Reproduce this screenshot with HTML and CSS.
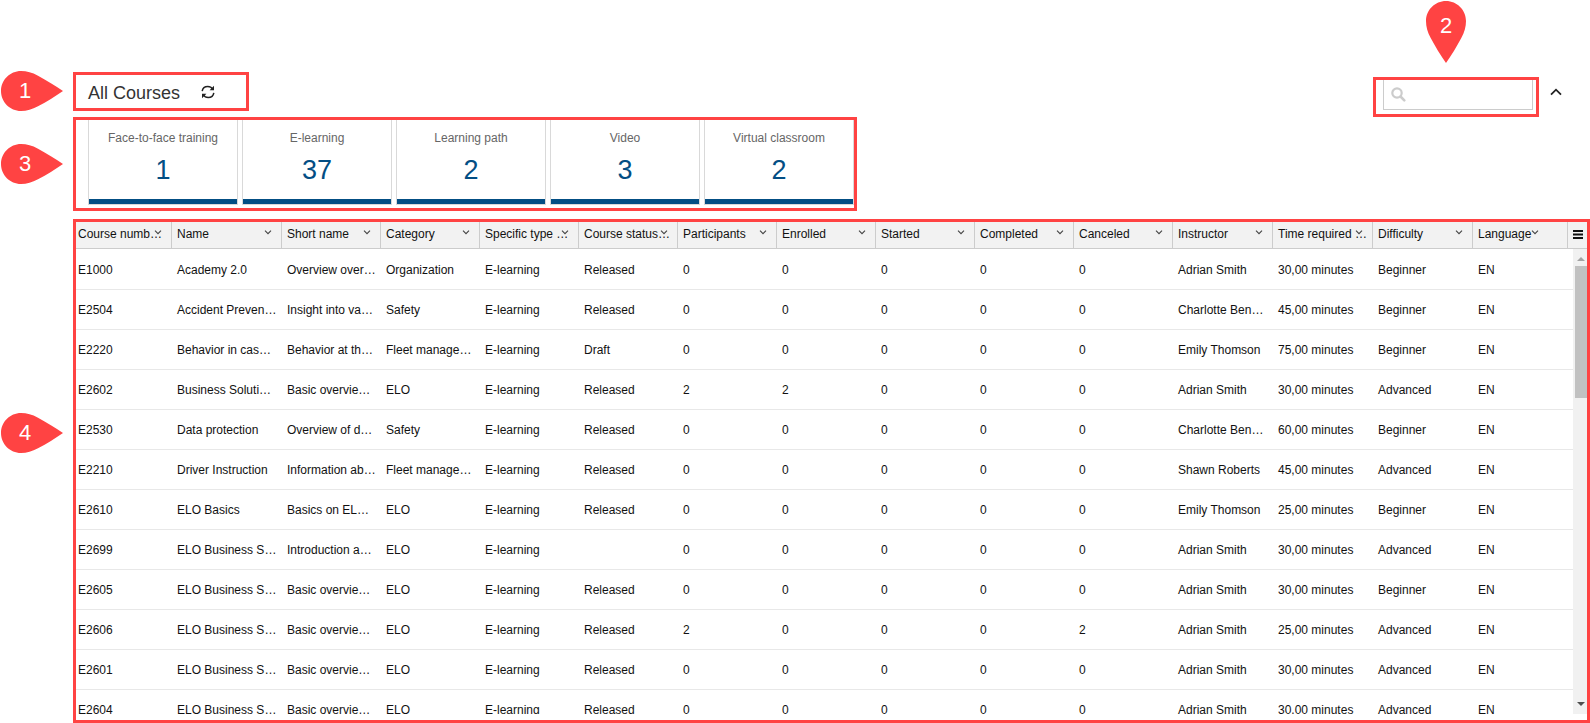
FILE: index.html
```html
<!DOCTYPE html>
<html lang="en">
<head>
<meta charset="utf-8">
<title>All Courses</title>
<link rel="stylesheet" href="styles.css">
</head>
<body>
<svg class="defs" aria-hidden="true">
  <symbol id="pin-right" viewBox="0 0 62 40"><path d="M20 0C9 0 0 9 0 20s9 20 20 20c6 0 11-1.500 17-4.700C46 30.500 54 25.500 62 20 54 14.500 46 9.500 37 4.700 31 1.500 26 0 20 0z"/></symbol>
  <symbol id="pin-down" viewBox="0 0 40 62"><path d="M0 20C0 9 9 0 20 0s20 9 20 20c0 6-1.500 11-4.700 17C30.500 46 25.500 54 20 62 14.500 54 9.500 46 4.700 37 1.500 31 0 26 0 20z"/></symbol>
  <symbol id="chev" viewBox="0 0 8 5"><path d="M1 .7l3 3 3-3" fill="none" stroke="#444" stroke-width="1.1"/></symbol>
</svg>
<main class="page">
  <header class="toolbar">
    <div class="mark title-mark">
      <span class="pin pin-side"><svg><use href="#pin-right"/></svg><b>1</b></span>
      <h1>All Courses</h1>
      <button class="icon-button" aria-label="Refresh"><svg width="14" height="14" viewBox="0 0 14 14" fill="none" stroke="#222" stroke-width="1.5"><path d="M1.2 6.2C1.6 3.4 4 1.6 6.8 1.6c2.100 0 3.800.9 4.900 2.600M12.800 7.800c-.4 2.800-2.800 4.600-5.600 4.600-2.100 0-3.800-.9-4.900-2.600"/><path d="M13 .8v4.400H8.600zM1 13.200V8.800h4.400z" fill="#222" stroke="none"/></svg></button>
    </div>
    <div class="tools">
      <div class="mark search-mark">
        <span class="pin pin-top"><svg><use href="#pin-down"/></svg><b>2</b></span>
        <div class="search">
          <svg width="15" height="15" viewBox="0 0 15 15" fill="none" stroke="#ccc"><circle cx="6" cy="6" r="4.700" stroke-width="2.200"/><path d="M9.500 9.500l3.800 3.800" stroke-width="2.600" stroke-linecap="round"/></svg>
          <input type="text" aria-label="Search">
        </div>
      </div>
      <button class="icon-button" aria-label="Collapse"><svg width="12" height="8" viewBox="0 0 12 8" fill="none" stroke="#222" stroke-width="1.800"><path d="M1 6.700l5-5 5 5"/></svg></button>
    </div>
  </header>
  <section class="mark cards">
    <span class="pin pin-side"><svg><use href="#pin-right"/></svg><b>3</b></span>
    <div class="card"><span>Face-to-face training</span><strong>1</strong></div>
    <div class="card"><span>E-learning</span><strong>37</strong></div>
    <div class="card"><span>Learning path</span><strong>2</strong></div>
    <div class="card"><span>Video</span><strong>3</strong></div>
    <div class="card"><span>Virtual classroom</span><strong>2</strong></div>
  </section>
  <section class="mark grid">
    <span class="pin pin-side pin-grid"><svg><use href="#pin-right"/></svg><b>4</b></span>
    <div class="viewport">
      <table>
        <colgroup><col class="c-number"><col class="c-name"><col span="9" class="c-std"><col span="3" class="c-wide"><col class="c-lang"><col class="c-menu"></colgroup>
        <thead><tr id="head"></tr></thead>
        <tbody id="rows"></tbody>
      </table>
      <div class="scrollbar" aria-hidden="true"><i class="arrow-up"></i><i class="thumb"></i><i class="arrow-down"></i></div>
    </div>
  </section>
</main>
<script src="app.js"></script>
</body>
</html>
```
FILE: styles.css
```css
* { box-sizing: border-box; }
body { margin: 0; background: #fff; color: #111; font: 12px/16px "Liberation Sans", Arial, sans-serif; }
.defs { position: absolute; width: 0; height: 0; }
button { border: 0; padding: 0; background: none; font: inherit; color: inherit; }
.icon-button svg { display: block; }

.page { display: flex; flex-direction: column; height: 100vh; padding: 72px 0 0 73px; }
.mark { position: relative; border: 3px solid #ff4343; }

.pin { position: absolute; display: flex; align-items: center; justify-content: center; color: #fff; }
.pin svg { position: absolute; inset: 0; width: 100%; height: 100%; fill: #ff4343; }
.pin b { position: relative; font-size: 22px; line-height: 24px; font-weight: 400; }
.pin-side { left: -75px; top: 50%; width: 62px; height: 40px; margin-top: -20px; padding-right: 14px; }
.title-mark .pin { top: 16px; }
.pin-grid { top: 211px; }
.pin-top { left: 50px; bottom: 51px; width: 40px; height: 62px; padding-bottom: 12px; }

.toolbar { display: flex; justify-content: space-between; height: 45px; }
.title-mark { display: flex; align-items: center; width: 176px; height: 39px; padding-left: 12px; gap: 21px; }
h1 { margin: 0; padding-top: 3px; font-size: 18px; line-height: 24px; font-weight: 400; color: #333; }
.tools { display: flex; gap: 11px; padding: 5px 28px 0 0; }
.tools > .icon-button { align-self: flex-start; padding-top: 11px; }
.search-mark { width: 166px; height: 40px; padding: 0 3px 0 7px; }
.search { display: flex; align-items: center; height: 30px; gap: 4px; padding: 0 7px; border: 1px solid #ccc; border-top: 0; }
.search svg { flex: none; }
.search input { flex: 1; min-width: 0; border: 0; padding: 0; outline: 0; font: inherit; background: none; }

.cards { display: flex; align-self: flex-start; gap: 4px; height: 94px; padding: 0 0 3px 12px; }
.card { display: flex; flex-direction: column; align-items: center; width: 150px; padding-top: 10px; border: 1px solid #d9d9d9; border-top: 0; box-shadow: inset 0 -5px #034e84; color: #666; }
.card strong { margin-top: 8px; font-size: 27px; line-height: 32px; font-weight: 400; color: #034e84; }

.grid { flex: 1; min-height: 0; margin-top: 8px; padding-bottom: 6px; }
.viewport { position: relative; height: 100%; overflow: hidden; }
table { width: 100%; table-layout: fixed; border-collapse: separate; border-spacing: 0; }
.c-number { width: 96px; }
.c-name { width: 110px; }
.c-std { width: 99px; }
.c-wide { width: 100px; }
.c-lang { width: 95px; }
.c-menu { width: 19px; }
th, td { padding: 0 0 0 5px; text-align: left; font-weight: 400; white-space: nowrap; overflow: hidden; }
th { position: relative; height: 27px; padding-bottom: 3px; background: #f2f2f2; border-right: 1px solid #ccc; border-bottom: 1px solid #ccc; }
th:first-child, td:first-child { padding-left: 2px; }
th:last-child { padding: 0; border-right: 0; }
th:last-child button { display: block; margin: 0 auto; padding-bottom: 2px; }
th:last-child svg { display: block; }
.sort { position: absolute; right: 9px; top: 8px; }
.sort svg { display: block; width: 8px; height: 5px; }
.sort-near { right: 28px; }
td { height: 40px; border-bottom: 1px solid #e8e8e8; }
tr:first-child td { height: 41px; padding-top: 1px; }

.scrollbar { position: absolute; top: 27px; right: 0; bottom: 0; width: 14px; background: #f1f1f1; }
.scrollbar i { position: absolute; }
.thumb { left: 2px; right: 0; top: 17px; height: 132px; background: #c1c1c1; }
.arrow-up, .arrow-down { left: 4px; border: 4px solid transparent; }
.arrow-up { top: 4px; border-bottom-color: #a3a3a3; }
.arrow-down { bottom: 4px; border-top-color: #505050; }
```
FILE: app.js
```js
const columns = ["Course numb…", "Name", "Short name", "Category", "Specific type …", "Course status…", "Participants", "Enrolled", "Started", "Completed", "Canceled", "Instructor", "Time required …", "Difficulty", "Language"];

const rows = [
  ["E1000", "Academy 2.0", "Overview over…", "Organization", "E-learning", "Released", 0, 0, 0, 0, 0, "Adrian Smith", "30,00 minutes", "Beginner", "EN"],
  ["E2504", "Accident Preven…", "Insight into va…", "Safety", "E-learning", "Released", 0, 0, 0, 0, 0, "Charlotte Ben…", "45,00 minutes", "Beginner", "EN"],
  ["E2220", "Behavior in cas…", "Behavior at th…", "Fleet manage…", "E-learning", "Draft", 0, 0, 0, 0, 0, "Emily Thomson", "75,00 minutes", "Beginner", "EN"],
  ["E2602", "Business Soluti…", "Basic overvie…", "ELO", "E-learning", "Released", 2, 2, 0, 0, 0, "Adrian Smith", "30,00 minutes", "Advanced", "EN"],
  ["E2530", "Data protection", "Overview of d…", "Safety", "E-learning", "Released", 0, 0, 0, 0, 0, "Charlotte Ben…", "60,00 minutes", "Beginner", "EN"],
  ["E2210", "Driver Instruction", "Information ab…", "Fleet manage…", "E-learning", "Released", 0, 0, 0, 0, 0, "Shawn Roberts", "45,00 minutes", "Advanced", "EN"],
  ["E2610", "ELO Basics", "Basics on EL…", "ELO", "E-learning", "Released", 0, 0, 0, 0, 0, "Emily Thomson", "25,00 minutes", "Beginner", "EN"],
  ["E2699", "ELO Business S…", "Introduction a…", "ELO", "E-learning", "", 0, 0, 0, 0, 0, "Adrian Smith", "30,00 minutes", "Advanced", "EN"],
  ["E2605", "ELO Business S…", "Basic overvie…", "ELO", "E-learning", "Released", 0, 0, 0, 0, 0, "Adrian Smith", "30,00 minutes", "Beginner", "EN"],
  ["E2606", "ELO Business S…", "Basic overvie…", "ELO", "E-learning", "Released", 2, 0, 0, 0, 2, "Adrian Smith", "25,00 minutes", "Advanced", "EN"],
  ["E2601", "ELO Business S…", "Basic overvie…", "ELO", "E-learning", "Released", 0, 0, 0, 0, 0, "Adrian Smith", "30,00 minutes", "Advanced", "EN"],
  ["E2604", "ELO Business S…", "Basic overvie…", "ELO", "E-learning", "Released", 0, 0, 0, 0, 0, "Adrian Smith", "30,00 minutes", "Advanced", "EN"]
];

document.getElementById("head").innerHTML = columns.map((name, i) =>
  `<th scope="col">${name}<button class="sort${i === columns.length - 1 ? " sort-near" : ""}" aria-label="${name} menu"><svg><use href="#chev"/></svg></button></th>`
).join("") + '<th><button aria-label="Grid menu"><svg width="10" height="9" viewBox="0 0 10 9" fill="#111"><path d="M0 0h10v2H0zM0 3.500h10v2H0zM0 7h10v2H0z"/></svg></button></th>';

document.getElementById("rows").innerHTML = rows.map(row =>
  `<tr>${row.map(value => `<td>${value}</td>`).join("")}<td></td></tr>`
).join("");
```
